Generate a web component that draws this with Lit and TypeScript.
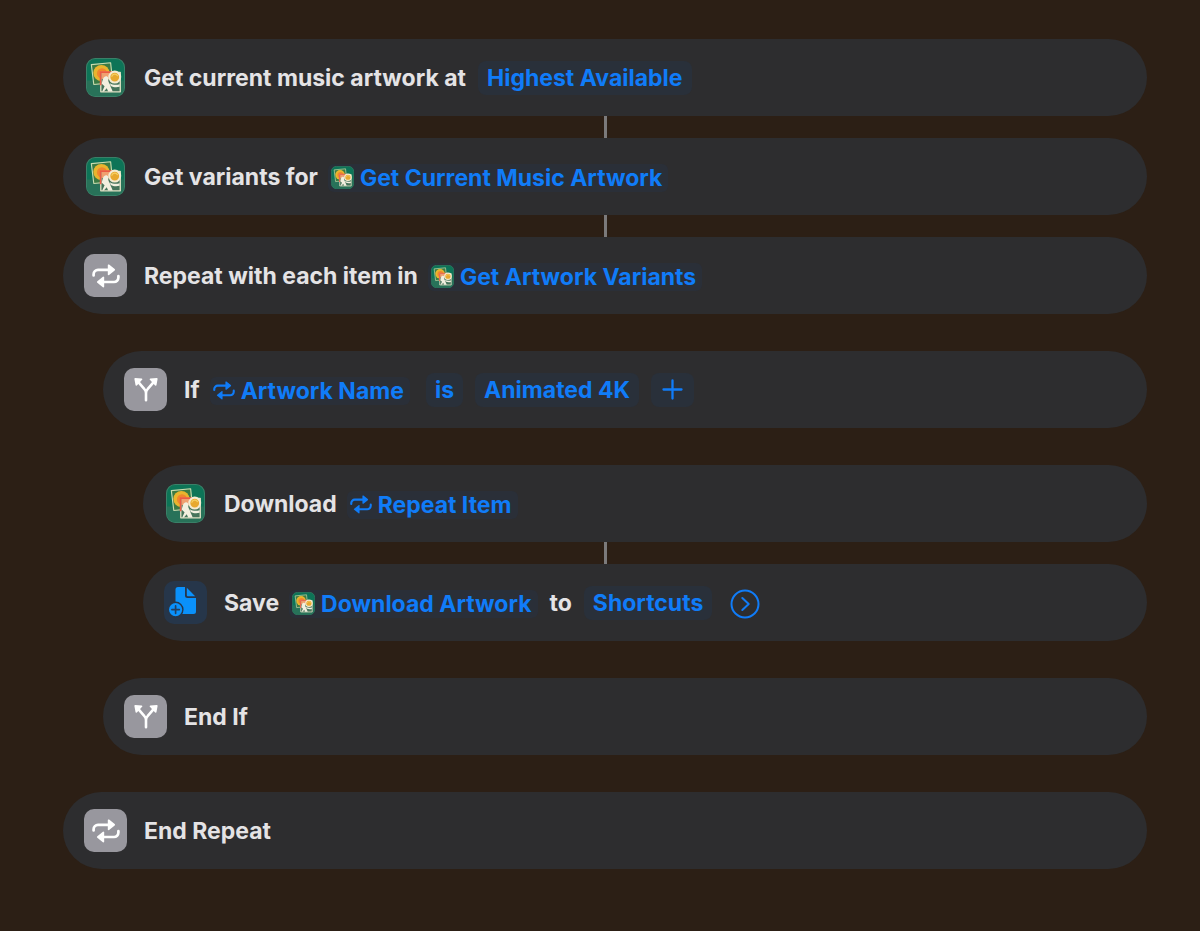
import { LitElement, html, svg, css, nothing, type TemplateResult } from "lit";
import { customElement, property } from "lit/decorators.js";
import { classMap } from "lit/directives/class-map.js";

type IconName = "artwork" | "repeat" | "branch" | "file";

type Part =
  | { kind: "text"; text: string }
  | { kind: "param"; text: string }
  | { kind: "variable"; text: string; icon: "artwork" | "repeat" }
  | { kind: "add" }
  | { kind: "disclose" };

interface Step {
  icon: IconName;
  depth: number;
  linked: boolean;
  parts: Part[];
}

const text = (t: string): Part => ({ kind: "text", text: t });
const param = (t: string): Part => ({ kind: "param", text: t });
const variable = (icon: "artwork" | "repeat", t: string): Part => ({ kind: "variable", icon, text: t });

const STEPS: Step[] = [
  { icon: "artwork", depth: 0, linked: false, parts: [text("Get current music artwork at"), param("Highest Available")] },
  { icon: "artwork", depth: 0, linked: true, parts: [text("Get variants for"), variable("artwork", "Get Current Music Artwork")] },
  { icon: "repeat", depth: 0, linked: true, parts: [text("Repeat with each item in"), variable("artwork", "Get Artwork Variants")] },
  { icon: "branch", depth: 1, linked: false, parts: [text("If"), variable("repeat", "Artwork Name"), param("is"), param("Animated 4K"), { kind: "add" }] },
  { icon: "artwork", depth: 2, linked: false, parts: [text("Download"), variable("repeat", "Repeat Item")] },
  { icon: "file", depth: 2, linked: true, parts: [text("Save"), variable("artwork", "Download Artwork"), text("to"), param("Shortcuts"), { kind: "disclose" }] },
  { icon: "branch", depth: 1, linked: false, parts: [text("End If")] },
  { icon: "repeat", depth: 0, linked: false, parts: [text("End Repeat")] },
];

const repeatGlyph = svg`
  <path d="M1.600 11.400v-1.200A4.400 4.400 0 0 1 6 5.800h11" fill="none" stroke="currentColor" stroke-width="2.700" stroke-linecap="round"/>
  <path d="M15.800 1.200v9.200a.8.800 0 0 0 1.300.600l5.600-4.500a.9.900 0 0 0 0-1.400L17.100.600a.8.800 0 0 0-1.300.600z" fill="currentColor"/>
  <path d="M26.400 12.200v1.400A4.400 4.400 0 0 1 22 18H11" fill="none" stroke="currentColor" stroke-width="2.700" stroke-linecap="round"/>
  <path d="M12.200 13.400v9.200a.8.800 0 0 1-1.300.600l-5.600-4.500a.9.900 0 0 1 0-1.400l5.600-4.500a.8.800 0 0 1 1.300.600z" fill="currentColor"/>`;

const artworkGlyph = svg`
  <rect x="0.500" y="0.500" width="37" height="37" rx="8.500" fill="#0d7457" stroke="#3a8068" stroke-width="1"/>
  <path d="M1 22h36v7a8 8 0 0 1-8 8H9a8 8 0 0 1-8-8z" fill="#317159" opacity=".75"/>
  <path d="M5.200 6.400 24 4.600 26 24 7.600 25.800z" fill="#3b7a44" stroke="#c9dcae" stroke-width="1.100" stroke-linejoin="round"/>
  <circle cx="15" cy="14.600" r="7.900" fill="#e9b52e"/>
  <circle cx="15.600" cy="15" r="5" fill="#f0872c"/>
  <path d="M14.400 14h19v19h-19z" fill="#46745b" stroke="#dfe0c4" stroke-width="1.300" stroke-linejoin="round"/>
  <path d="M15 14.600h10v6H15z" fill="#f0a070"/>
  <path d="M14.200 26.500V13.800h12" fill="none" stroke="#ec5a45" stroke-width="1.600"/>
  <path d="M15.400 25c.7-3.600 1.600-7.200 4.100-7.200 2.200 0 2.700 2.300 2.200 4-.1 1.100.5 2 1.200 3.200.8 1.300.9 2.800 1.700 4.200l1.400 3.400H21.600l-1.400-3.200-2.800 3.200h-1.600l2.300-5z" fill="#f2efdf"/>
  <path d="M23.200 24.500c2.600 1.600 6 2 9.600 1v2.500c-3.400.8-6.300.4-8.600-.8z" fill="#f2efdf"/>
  <circle cx="28" cy="18.600" r="5.300" fill="#e7a82f" stroke="#f4ead0" stroke-width="2"/>
  <path d="M25.200 17.800a3 3 0 0 1 5.400-.6" fill="none" stroke="#f5cf62" stroke-width="1.200" stroke-linecap="round"/>`;

const branchGlyph = svg`
  <path d="M12 23.200V16c0-1.800-.5-2.900-1.800-4.200L4.600 5.400M12 16c0-1.800.5-2.900 1.800-4.200l5.600-6.400" fill="none" stroke="currentColor" stroke-width="2.600" stroke-linecap="round" stroke-linejoin="round"/>
  <path d="M1.200 1 7.600 1.400a.8.800 0 0 1 .5 1.400L2.900 8.400a.8.800 0 0 1-1.400-.5L.400 1.900a.8.800 0 0 1 .8-.9z" fill="currentColor"/>
  <path d="M22.800 1 16.400 1.400a.8.800 0 0 0-.5 1.400L21.100 8.400a.8.800 0 0 0 1.400-.5l1.100-6a.8.800 0 0 0-.8-.9z" fill="currentColor"/>`;

const fileGlyph = svg`
  <path d="M13 5h7v8.500a2.500 2.500 0 0 0 2.500 2.500h8.500v13.500a2.500 2.500 0 0 1-2.500 2.500h-15.500a2.500 2.500 0 0 1-2.500-2.500V7.500A2.500 2.500 0 0 1 13 5z" fill="#0a91fb"/>
  <path d="M21.800 5.800v7.400a1 1 0 0 0 1 1h7.400z" fill="#0a91fb"/>
  <circle cx="10.600" cy="27.600" r="7.300" fill="#0a91fb" stroke="#26364a" stroke-width="1.400"/>
  <path d="M10.600 23.900v7.400M6.900 27.600h7.400" stroke="#233f5f" stroke-width="1.700" stroke-linecap="round"/>`;

function stepIcon(name: IconName): TemplateResult {
  switch (name) {
    case "artwork":
      return html`<span class="tile"><svg class="art" viewBox="0 0 38 38" aria-hidden="true">${artworkGlyph}</svg></span>`;
    case "repeat":
      return html`<span class="tile grey"><svg class="loop" viewBox="0 0 28 24" aria-hidden="true">${repeatGlyph}</svg></span>`;
    case "branch":
      return html`<span class="tile grey"><svg class="fork" viewBox="0 0 24 25" aria-hidden="true">${branchGlyph}</svg></span>`;
    case "file":
      return html`<span class="tile blue"><svg class="file" viewBox="0 0 42 42" aria-hidden="true">${fileGlyph}</svg></span>`;
  }
}

@customElement("shortcut-step")
class ShortcutStep extends LitElement {
  @property({ attribute: false }) step!: Step;

  static styles = css`
    :host {
      display: block;
    }
    .card {
      display: flex;
      align-items: center;
      gap: 17px;
      min-height: 77px;
      padding: 0 21px;
      border-radius: 39px;
      background: #2d2d2f;
      box-sizing: border-box;
      color: #e4e3e5;
      font: 700 23px/32px Inter, "Liberation Sans", sans-serif;
    }
    .tile {
      display: flex;
      flex: none;
      align-items: center;
      justify-content: center;
      width: 43px;
      height: 43px;
      border-radius: 10px;
      color: #fff;
    }
    .grey {
      background: #98979e;
    }
    .blue {
      background: #26364a;
    }
    .art {
      width: 39px;
      height: 39px;
    }
    .loop {
      width: 28px;
      height: 24px;
    }
    .fork {
      width: 24px;
      height: 25px;
    }
    .file {
      width: 42px;
      height: 42px;
    }
    .parts {
      display: flex;
      flex-wrap: wrap;
      align-items: center;
      column-gap: 10px;
    }
    button {
      display: flex;
      align-items: center;
      margin: 0;
      border: 0;
      font: inherit;
      color: #107cf8;
      background: #29303a;
      cursor: pointer;
    }
    .param {
      height: 34px;
      padding: 0 9px;
      border-radius: 8px;
    }
    .param + .param,
    .label + .param {
      margin-left: 2px;
    }
    .variable {
      gap: 6px;
      height: 28px;
      padding: 0 6px 0 3px;
      margin-top: 2px;
      border-radius: 6px;
      background: #2a2f38;
    }
    .variable + .param {
      margin-left: 6px;
    }
    .variable + .label {
      margin-left: 2px;
    }
    .mini {
      width: 23px;
      height: 23px;
    }
    .mini-loop {
      width: 22px;
      height: 19px;
    }
    .add {
      padding: 0 11px;
    }
    .plus {
      width: 21px;
      height: 21px;
    }
    .disclose {
      padding: 0;
      margin: 2px 0 0 8px;
      background: none;
      border-radius: 50%;
    }
    .chevron {
      width: 30px;
      height: 30px;
    }
  `;

  private part(p: Part) {
    switch (p.kind) {
      case "text":
        return html`<span class="label">${p.text}</span>`;
      case "param":
        return html`<button type="button" class="param">${p.text}</button>`;
      case "variable":
        return html`<button type="button" class="variable">
          ${p.icon === "artwork"
            ? html`<svg class="mini" viewBox="0 0 38 38" aria-hidden="true">${artworkGlyph}</svg>`
            : html`<svg class="mini-loop" viewBox="0 0 28 24" aria-hidden="true">${repeatGlyph}</svg>`}
          <span>${p.text}</span>
        </button>`;
      case "add":
        return html`<button type="button" class="param add" aria-label="Add condition">
          <svg class="plus" viewBox="0 0 21 21" aria-hidden="true">
            <path d="M10.500 1.500v18M1.500 10.500h18" stroke="currentColor" stroke-width="2.300" stroke-linecap="round" />
          </svg>
        </button>`;
      case "disclose":
        return html`<button type="button" class="disclose" aria-label="Show more">
          <svg class="chevron" viewBox="0 0 30 30" fill="none" stroke="currentColor" stroke-width="2" aria-hidden="true">
            <circle cx="15" cy="15" r="13.500" />
            <path d="m12.300 9 6.400 6-6.400 6" stroke-linecap="round" stroke-linejoin="round" />
          </svg>
        </button>`;
      default:
        return nothing;
    }
  }

  render() {
    return html`<div class="card">
      ${stepIcon(this.step.icon)}
      <div class="parts">${this.step.parts.map((p) => this.part(p))}</div>
    </div>`;
  }
}

@customElement("app-root")
class AppRoot extends LitElement {
  static styles = css`
    :host {
      display: block;
      min-height: 100vh;
      box-sizing: border-box;
      padding: 39px 53px 39px 63px;
      background: #2c1f15;
    }
    .steps {
      display: flex;
      flex-direction: column;
      margin: 0;
      padding: 0;
      list-style: none;
    }
    .row + .row {
      padding-top: 37px;
    }
    .row + .linked {
      padding-top: 0;
    }
    .link {
      width: 3px;
      height: 22px;
      margin: 0 auto;
      background: #7b7a7b;
    }
    .depth-1 {
      margin-left: 40px;
    }
    .depth-2 {
      margin-left: 80px;
    }
  `;

  render() {
    return html`<ol class="steps">
      ${STEPS.map(
        (s) => html`<li class=${classMap({ row: true, linked: s.linked })}>
          ${s.linked ? html`<div class="link"></div>` : nothing}
          <shortcut-step class=${`depth-${s.depth}`} .step=${s}></shortcut-step>
        </li>`,
      )}
    </ol>`;
  }
}
